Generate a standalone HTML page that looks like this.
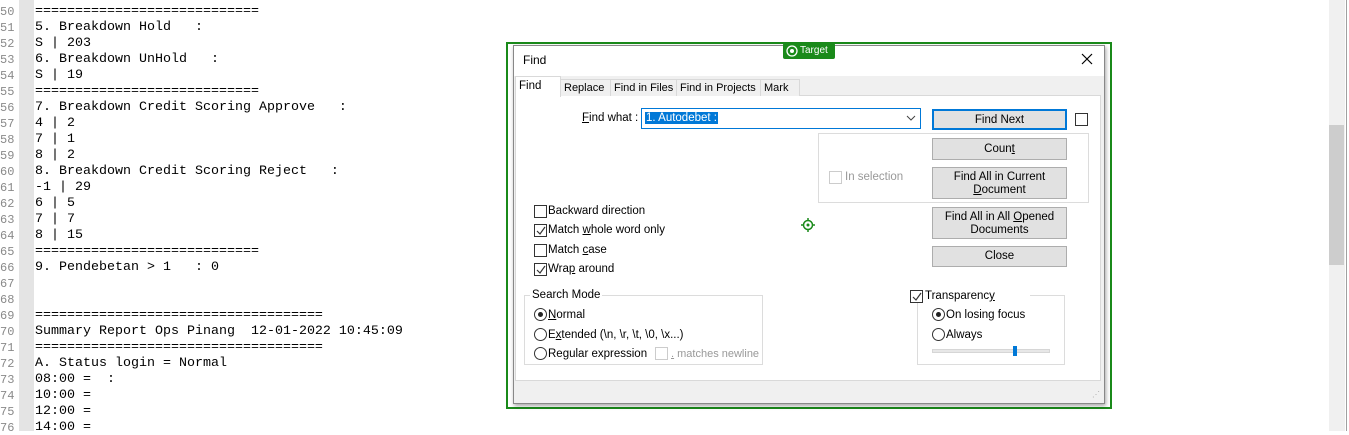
<!DOCTYPE html>
<html><head><meta charset="utf-8"><style>
*{margin:0;padding:0;box-sizing:border-box}
body{width:1349px;height:431px;overflow:hidden;background:#fff;position:relative;font-family:"Liberation Sans",sans-serif}
.gut{position:absolute;left:19px;top:0;width:15px;height:431px;background:#e4e4e4}
.ln{position:absolute;left:0;width:19px;font:12px "Liberation Mono",monospace;color:#8a8a8a}
.tx{position:absolute;left:35px;font:13.33px "Liberation Mono",monospace;color:#000;white-space:pre}
.sb{position:absolute;left:1329px;top:0;width:16px;height:431px;background:#f0f0f0}
.th{position:absolute;left:1329px;top:125px;width:15px;height:140px;background:#cdcdcd}
.a{position:absolute}
.ui{font-size:11.5px;color:#000;white-space:nowrap}
.btn{position:absolute;left:932px;width:135px;background:#e1e1e1;border:1px solid #adadad;font-size:11.5px;text-align:center;line-height:13px;white-space:nowrap}
.cb{position:absolute;width:13px;height:13px;border:1px solid #333;background:#fff}
.rd{position:absolute;width:13px;height:13px;border:1px solid #333;border-radius:50%;background:#fff}
.tab{position:absolute;top:79px;height:17px;border:1px solid #d9d9d9;border-bottom:none;background:#f0f0f0;font-size:11px;padding:2px 3px 0;white-space:nowrap;overflow:hidden}
.grp{position:absolute;border:1px solid #dcdcdc}
u{text-decoration:underline}
</style></head><body>
<div class="gut"></div>
<div class="sb"></div><div class="th"></div>
<div class="a" style="left:1346px;top:0;width:1px;height:431px;background:#a0a0a0"></div>
<div id="ed"></div>
<script>
var L=["============================","5. Breakdown Hold   :","S | 203","6. Breakdown UnHold   :","S | 19","============================","7. Breakdown Credit Scoring Approve   :","4 | 2","7 | 1","8 | 2","8. Breakdown Credit Scoring Reject   :","-1 | 29","6 | 5","7 | 7","8 | 15","============================","9. Pendebetan > 1   : 0","","","====================================","Summary Report Ops Pinang  12-01-2022 10:45:09","====================================","A. Status login = Normal","08:00 =  :","10:00 =","12:00 =","14:00 ="];
var h="";for(var i=0;i<L.length;i++){var y=4+i*16;h+='<div class="ln" style="top:'+(y+1)+'px">'+(50+i)+'</div><div class="tx" style="top:'+y+'px">'+L[i].replace(/</g,"&lt;").replace(/>/g,"&gt;")+'</div>';}
document.getElementById("ed").innerHTML=h;
</script>
<div class="a" style="left:506px;top:42px;width:606px;height:367px;border:2px solid #1a8a1a"></div>
<div class="a" style="left:513px;top:45px;width:592px;height:359px;background:#f0f0f0;border:1px solid #888;box-shadow:1px 2px 4px rgba(0,0,0,.35)"></div>
<div class="a" style="left:514px;top:46px;width:590px;height:30px;background:#fff"></div>
<div class="a ui" style="left:523px;top:53px;font-size:12px">Find</div>
<svg class="a" style="left:1081px;top:53px" width="12" height="12"><path d="M1 1L11 11M11 1L1 11" stroke="#000" stroke-width="1.2"/></svg>
<div class="a" style="left:783px;top:43px;width:52px;height:16px;background:#1a8a1a;border-radius:2px;color:#fff;font-size:10px;padding:2px 0 0 17px">Target</div>
<svg class="a" style="left:786px;top:45px" width="12" height="12"><circle cx="6" cy="6" r="5" fill="none" stroke="#fff" stroke-width="1.3"/><circle cx="6" cy="6" r="2" fill="#fff"/></svg>
<div class="a" style="left:515px;top:95px;width:586px;height:286px;background:#fff;border:1px solid #d9d9d9"></div>
<div class="tab" style="left:560px;width:51px">Replace</div>
<div class="tab" style="left:610px;width:67px">Find in Files</div>
<div class="tab" style="left:676px;width:85px">Find in Projects</div>
<div class="tab" style="left:760px;width:40px">Mark</div>
<div class="tab" style="left:515px;top:76px;height:21px;width:46px;background:#fff;padding-top:3px;font-size:11.5px">Find</div>
<div class="a ui" style="left:582px;top:112px"><u>F</u>ind what :</div>
<div class="a" style="left:641px;top:108px;width:280px;height:21px;border:1px solid #0078d7;background:#fff"></div>
<div class="a ui" style="left:645px;top:112px;background:#0078d7;color:#fff;padding:0 1px">1. Autodebet :</div>
<svg class="a" style="left:906px;top:115px" width="10" height="6"><path d="M1 1L5 5L9 1" fill="none" stroke="#444"/></svg>
<div class="btn" style="top:109px;height:21px;border:2px solid #0078d7;padding-top:3px">Find Next</div>
<div class="cb" style="left:1075px;top:113px"></div>
<div class="grp" style="left:818px;top:133px;width:271px;height:70px"></div>
<div class="cb" style="left:829px;top:171px;border-color:#ccc"></div>
<div class="a ui" style="left:845px;top:171px;color:#999">In selection</div>
<div class="btn" style="top:138px;height:22px;padding-top:4px">Coun<u>t</u></div>
<div class="btn" style="top:167px;height:32px;padding-top:3px">Find All in Current<br><u>D</u>ocument</div>
<div class="btn" style="top:207px;height:32px;padding-top:3px">Find All in All <u>O</u>pened<br>Documents</div>
<div class="btn" style="top:246px;height:21px;padding-top:3px">Close</div>
<div class="cb" style="left:534px;top:205px"></div><div class="a ui" style="left:548px;top:205px">Backward direction</div>
<div class="cb" style="left:534px;top:224px"></div><div class="a ui" style="left:548px;top:224px">Match <u>w</u>hole word only</div>
<div class="cb" style="left:534px;top:244px"></div><div class="a ui" style="left:548px;top:244px">Match <u>c</u>ase</div>
<div class="cb" style="left:534px;top:263px"></div><div class="a ui" style="left:548px;top:263px">Wra<u>p</u> around</div>
<svg class="a" style="left:535px;top:225px" width="12" height="12"><path d="M2 6L5 9L10 2" fill="none" stroke="#333" stroke-width="1.2"/></svg>
<svg class="a" style="left:535px;top:264px" width="12" height="12"><path d="M2 6L5 9L10 2" fill="none" stroke="#333" stroke-width="1.2"/></svg>
<svg class="a" style="left:801px;top:218px" width="14" height="14"><circle cx="7" cy="7" r="4.5" fill="none" stroke="#1a8a1a" stroke-width="1.5"/><circle cx="7" cy="7" r="1.5" fill="#1a8a1a"/><path d="M7 0V3M7 11V14M0 7H3M11 7H14" stroke="#1a8a1a" stroke-width="1.5"/></svg>
<div class="grp" style="left:524px;top:295px;width:239px;height:70px"></div>
<div class="a ui" style="left:530px;top:289px;background:#fff;padding:0 2px">Search Mode</div>
<div class="rd" style="left:534px;top:308px"></div><div class="a" style="left:538px;top:312px;width:5px;height:5px;border-radius:50%;background:#222"></div><div class="a ui" style="left:548px;top:309px"><u>N</u>ormal</div>
<div class="rd" style="left:534px;top:328px"></div><div class="a ui" style="left:548px;top:329px">E<u>x</u>tended (\n, \r, \t, \0, \x...)</div>
<div class="rd" style="left:534px;top:347px"></div><div class="a ui" style="left:548px;top:348px">Re<u>g</u>ular expression</div>
<div class="cb" style="left:655px;top:347px;border-color:#ccc"></div><div class="a ui" style="left:671px;top:348px;color:#999;font-size:11px"><u>.</u> matches newline</div>
<div class="grp" style="left:917px;top:295px;width:148px;height:70px"></div>
<div class="a" style="left:908px;top:288px;width:122px;height:14px;background:#fff"></div>
<div class="cb" style="left:910px;top:290px"></div>
<svg class="a" style="left:911px;top:291px" width="12" height="12"><path d="M2 6L5 9L10 2" fill="none" stroke="#333" stroke-width="1.2"/></svg>
<div class="a ui" style="left:925px;top:290px">Transparenc<u>y</u></div>
<div class="rd" style="left:932px;top:308px"></div><div class="a" style="left:936px;top:312px;width:5px;height:5px;border-radius:50%;background:#222"></div><div class="a ui" style="left:946px;top:309px">On losing focus</div>
<div class="rd" style="left:932px;top:328px"></div><div class="a ui" style="left:946px;top:329px">Always</div>
<div class="a" style="left:932px;top:349px;width:118px;height:4px;background:#e7e7e7;border:1px solid #d6d6d6"></div>
<div class="a" style="left:1013px;top:346px;width:4px;height:10px;background:#0078d7"></div>
<div class="a" style="left:1092px;top:390px;color:#aaa;font-size:8px">⋰</div>
</body></html>
